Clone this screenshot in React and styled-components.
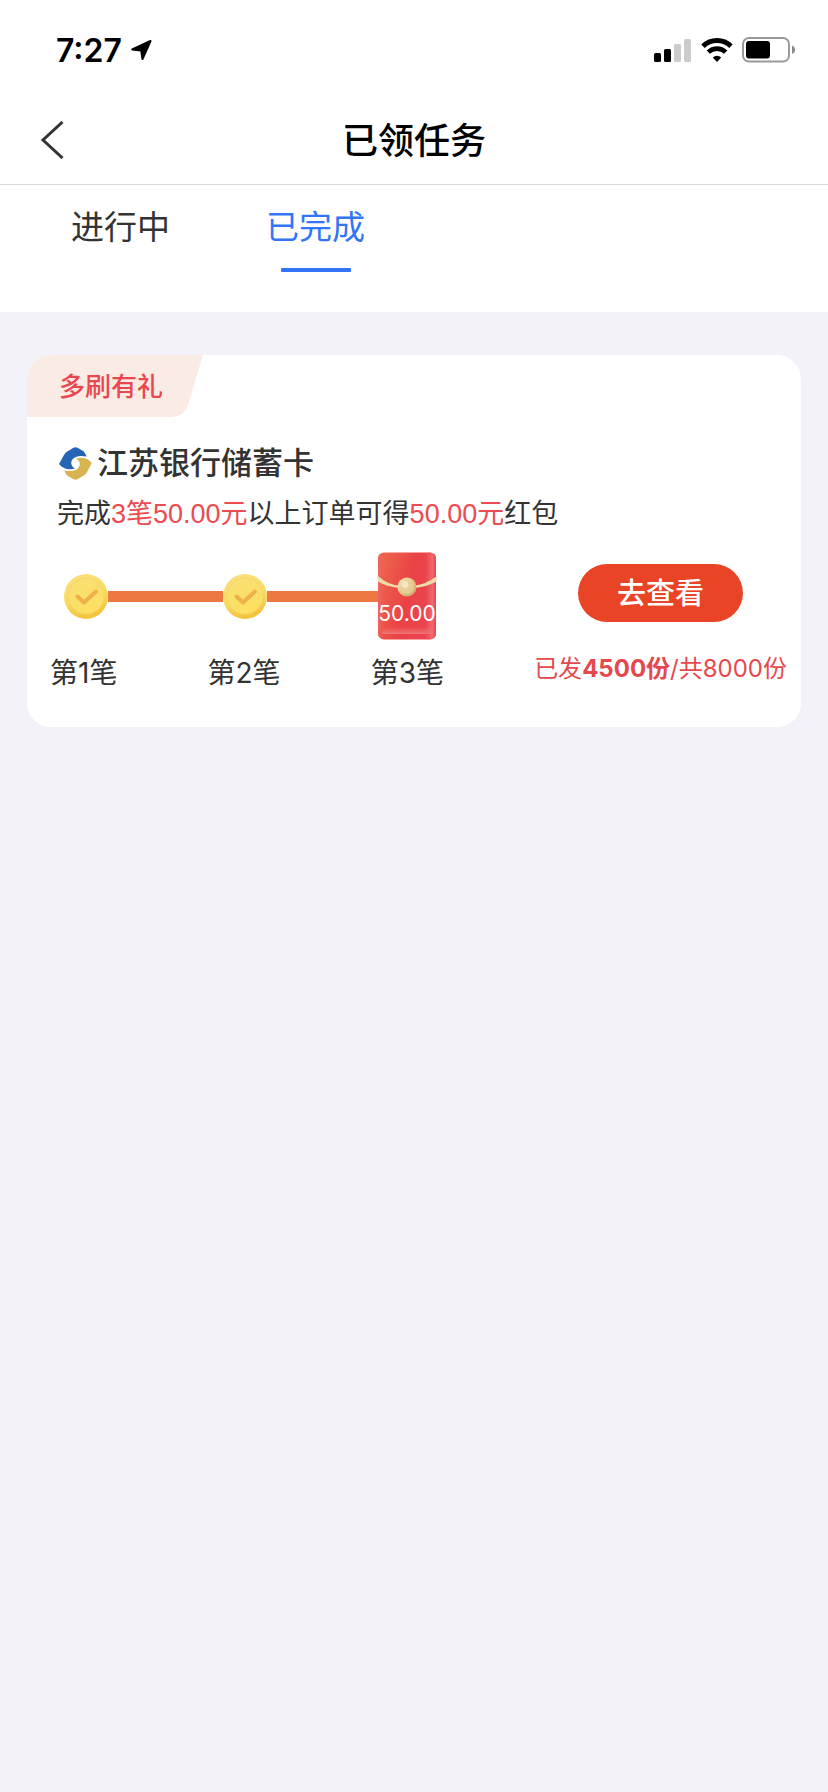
import React, { useState } from "react";
import styled, { createGlobalStyle } from "styled-components";

const GlobalStyle = createGlobalStyle`
	* {
		box-sizing: border-box;
	}

	body {
		margin: 0;
		background-color: #f3f2f9;
		color: #333;
		font-family: Inter, "Noto Sans CJK SC", sans-serif;
	}

	button {
		border: none;
		padding: 0;
		background: none;
		color: inherit;
		font: inherit;
		cursor: pointer;
	}

	h1, h2, p, ul {
		margin: 0;
		padding: 0;
	}

	svg {
		display: block;
		flex-shrink: 0;
	}
`;

const StatusBar = styled.div`
	display: flex;
	justify-content: space-between;
	align-items: center;
	height: 96px;
	padding: 4px 33px 0 56px;
	background-color: #fff;
	color: #000;

	.time {
		font-size: 32px;
		font-weight: 600;
	}

	.group {
		display: flex;
		align-items: center;
		gap: 9px;
	}
`;

const NavBar = styled.header`
	display: grid;
	grid-template-columns: 80px 1fr 80px;
	align-items: center;
	height: 89px;
	border-bottom: 1px solid #dcdcdc;
	background-color: #fff;
`;

const BackButton = styled.button`
	padding-left: 40px;
`;

const Title = styled.h1`
	padding-top: 2px;
	color: #000;
	font-size: 36px;
	font-weight: 500;
	line-height: 52px;
	text-align: center;
`;

const Tabs = styled.nav`
	display: flex;
	gap: 96px;
	padding: 18px 71px 40px;
	background-color: #fff;
`;

const Tab = styled.button`
	display: flex;
	flex-direction: column;
	align-items: center;
	gap: 17px;
	color: ${(props) => (props.$active ? "#3375f6" : "#333")};
	font-size: 33px;
	line-height: 48px;

	&::after {
		content: "";
		width: 70px;
		height: 4px;
		border-radius: 1px;
		background-color: ${(props) => (props.$active ? "#3375f6" : "transparent")};
	}
`;

const List = styled.main`
	padding: 43px 27px;
`;

const Card = styled.article`
	overflow: hidden;
	padding-bottom: 35px;
	border-radius: 24px;
	background-color: #fff;
`;

const Tag = styled.div`
	position: relative;
	width: 176px;
	height: 62px;
	padding-left: 32px;
	color: #e8484e;
	font-size: 26px;
	font-weight: 500;
	line-height: 64px;

	svg {
		position: absolute;
		top: 0;
		left: 0;
	}

	span {
		position: relative;
	}
`;

const CardTitle = styled.h2`
	display: flex;
	align-items: center;
	gap: 5px;
	padding: 24px 32px 0;
	font-size: 31px;
	font-weight: 500;
	line-height: 44px;
`;

const Rule = styled.p`
	padding: 10px 30px 0;
	font-family: "Liberation Sans", "Noto Sans CJK SC", sans-serif;
	font-size: 27px;
	line-height: 38px;
`;

const Highlight = styled.span`
	color: #ea4c51;
`;

const CardBody = styled.div`
	display: flex;
	justify-content: space-between;
	align-items: flex-start;
	padding: 19px 14px 0 23px;
`;

const Progress = styled.div`
	flex: 0 1 394px;
`;

const Track = styled.div`
	display: flex;
	align-items: center;
	height: 88px;
	padding: 0 7px 0 14px;
`;

const Line = styled.div`
	flex: 1;
	height: 11px;
	background-color: #ee7842;
`;

// the line runs a little way under the envelope
const Envelope = styled.div`
	position: relative;
	margin-left: -4px;

	span {
		position: absolute;
		top: 49px;
		left: 0;
		width: 100%;
		color: #fff;
		font-size: 21px;
		line-height: 26px;
		text-align: center;
	}
`;

const StepNames = styled.ul`
	display: flex;
	justify-content: space-between;
	padding-top: 14px;
	font-size: 28px;
	line-height: 38px;
	list-style: none;
`;

const Action = styled.div`
	display: flex;
	flex-direction: column;
	align-items: center;
	gap: 29px;
	padding-top: 12px;
`;

const ViewButton = styled.button`
	width: 165px;
	height: 58px;
	border-radius: 29px;
	background-color: #ea4426;
	color: #fff;
	font-size: 29px;
	font-weight: 500;
	line-height: 60px;
`;

const Count = styled.p`
	color: #e5484d;
	font-size: 24px;
	line-height: 36px;
	white-space: nowrap;
`;

const ArrowIcon = () => (
	<svg width="21" height="21" viewBox="0 0 21 21">
		<path
			d="M19.5 1 11.5 19 10.2 10.6 1.2 9.4Z"
			fill="#000"
			stroke="#000"
			strokeWidth="2"
			strokeLinejoin="round"
		/>
	</svg>
);

const SignalIcon = () => (
	<svg width="38" height="24" viewBox="0 0 38 24">
		<rect x="0" y="15" width="7" height="9" rx="1.5" />
		<rect x="10" y="11" width="7" height="13" rx="1.5" />
		<rect x="20" y="6" width="7" height="18" rx="1.5" fill="#ccc" />
		<rect x="30" y="1" width="7" height="23" rx="1.5" fill="#ccc" />
	</svg>
);

const WifiIcon = () => (
	<svg width="32" height="24" viewBox="0 0 32 24">
		<path d="M2 8.2a20 20 0 0 1 28 0" fill="none" stroke="#000" strokeWidth="4.8" />
		<path d="M7.3 14.2a12.4 12.4 0 0 1 17.4 0" fill="none" stroke="#000" strokeWidth="4.6" />
		<path d="M11.8 19.4a6 6 0 0 1 8.4 0L16 24Z" />
	</svg>
);

const BatteryIcon = () => (
	<svg width="53" height="26" viewBox="0 0 53 26">
		<rect x="1" y="1" width="46" height="23.6" rx="6" fill="#fff" stroke="#999" strokeWidth="2" />
		<rect x="4" y="4" width="24" height="17.5" rx="3" />
		<path d="M50 8.500q3 1.200 3 4.300t-3 4.300Z" fill="#8a8a8a" />
	</svg>
);

const BackIcon = () => (
	<svg width="24" height="38" viewBox="0 0 24 38">
		<path d="M22.5 1 3 19l19.5 18" fill="none" stroke="#333" strokeWidth="3" />
	</svg>
);

const BankLogo = () => (
	<svg width="33" height="33" viewBox="0 0 33 33">
		<path
			d="M0 17C3 12.500 5 6.500 7.500 5L14 1Q16.500-.5 19 1L24.500 4.200Q26 5.500 27.700 9.600C22 8.400 17 8.600 13.800 12 11 15.200 12 19.300 16 21.500 10 23.200 4.500 22.400 0 17Z"
			fill="#2664b4"
		/>
		<path
			d="M33 16C30 20.500 28 26.500 25.500 28L19 32Q16.500 33.500 14 32L8.500 28.800Q7 27.500 5.300 23.400C11 24.600 16 24.400 19.200 21 22 17.800 21 13.700 17 11.500 23 9.800 28.500 10.600 33 16Z"
			fill="#d8b450"
		/>
	</svg>
);

const CoinIcon = () => (
	<svg width="44" height="45" viewBox="0 0 44 45">
		<defs>
			<linearGradient id="coinRim" x1="0" y1="0" x2="0.3" y2="1">
				<stop offset="0" stopColor="#f9e184" />
				<stop offset="0.6" stopColor="#f8dc60" />
				<stop offset="1" stopColor="#f4c440" />
			</linearGradient>
			<linearGradient id="coinFace" x1="0" y1="0" x2="0.4" y2="1">
				<stop offset="0" stopColor="#f8df74" />
				<stop offset="1" stopColor="#fbe062" />
			</linearGradient>
		</defs>
		<ellipse cx="22" cy="22.5" rx="22" ry="22.5" fill="url(#coinRim)" />
		<circle cx="22" cy="22" r="18" fill="url(#coinFace)" stroke="#f5d666" strokeWidth="1" />
		<path
			d="M13.5 22.5 20 28.500 32 17.500"
			fill="none"
			stroke="#f0b048"
			strokeWidth="4"
			strokeLinecap="round"
			strokeLinejoin="round"
		/>
	</svg>
);

const EnvelopeIcon = () => (
	<svg width="60" height="88" viewBox="0 0 60 88">
		<defs>
			<linearGradient id="envPaper" x1="0" y1="0" x2="1" y2="0.35">
				<stop offset="0" stopColor="#ee6a4c" />
				<stop offset="0.6" stopColor="#ea4246" />
				<stop offset="1" stopColor="#ea4450" />
			</linearGradient>
			<linearGradient id="envSide" x1="0" y1="0" x2="1" y2="0">
				<stop offset="0" stopColor="#ee6460" />
				<stop offset="0.1" stopColor="#ee6460" stopOpacity="0" />
				<stop offset="0.82" stopColor="#f06870" stopOpacity="0" />
				<stop offset="0.94" stopColor="#f06870" />
				<stop offset="1" stopColor="#ea4448" />
			</linearGradient>
			<linearGradient id="envShine" x1="0" y1="0" x2="0" y2="1">
				<stop offset="0" stopColor="#f07070" stopOpacity="0" />
				<stop offset="1" stopColor="#f07474" />
			</linearGradient>
			<linearGradient id="envGold" x1="0" y1="0" x2="1" y2="1">
				<stop offset="0" stopColor="#f8eac4" />
				<stop offset="0.5" stopColor="#e4c688" />
				<stop offset="1" stopColor="#c89c5c" />
			</linearGradient>
		</defs>
		<rect x="1" y="0.5" width="58" height="87" rx="6" fill="url(#envPaper)" />
		<rect x="1" y="0.5" width="58" height="87" rx="6" fill="url(#envSide)" />
		<path d="M6 75h48l1 7H5Z" fill="url(#envShine)" />
		<path d="M.5 23.500V29.500Q10 34.500 22 36H38Q50 34.500 59.500 29.500V24.500Q49 32 38 33.500H22Q10 32.500 .5 23.500Z" fill="#f0dca8" />
		<circle cx="30" cy="35" r="9.500" fill="url(#envGold)" />
		<circle cx="30" cy="35" r="7" fill="#ead09a" opacity="0.8" />
		<circle cx="28" cy="32.500" r="3.500" fill="#f8ecd0" opacity="0.8" />
	</svg>
);

const tabs = ["进行中", "已完成"];
const task = {
	tag: "多刷有礼",
	bank: "江苏银行储蓄卡",
	orders: 3,
	minimum: "50.00",
	reward: "50.00",
	sent: 4500,
	total: 8000,
};

const TaskCard = ({ info }) => {
	return (
		<Card>
			<Tag>
				<svg width="176" height="62" viewBox="0 0 176 62">
					<path d="M0 0H176L161 50Q157 62 143 62H0Z" fill="#fbebe5" />
				</svg>
				<span>{info.tag}</span>
			</Tag>
			<CardTitle>
				<BankLogo />
				{info.bank}
			</CardTitle>
			<Rule>
				完成
				<Highlight>
					{info.orders}笔{info.minimum}元
				</Highlight>
				以上订单可得<Highlight>{info.reward}元</Highlight>红包
			</Rule>
			<CardBody>
				<Progress>
					<Track>
						<CoinIcon />
						<Line />
						<CoinIcon />
						<Line />
						<Envelope>
							<EnvelopeIcon />
							<span>{info.reward}</span>
						</Envelope>
					</Track>
					<StepNames>
						{[1, 2, 3].map((step) => (
							<li key={step}>第{step}笔</li>
						))}
					</StepNames>
				</Progress>
				<Action>
					<ViewButton>去查看</ViewButton>
					<Count>
						已发<b>{info.sent}份</b>/共{info.total}份
					</Count>
				</Action>
			</CardBody>
		</Card>
	);
};

const App = () => {
	const [current, setCurrent] = useState(1);

	return (
		<>
			<GlobalStyle />
			<StatusBar>
				<div className="group">
					<span className="time">7:27</span>
					<ArrowIcon />
				</div>
				<div className="group">
					<SignalIcon />
					<WifiIcon />
					<BatteryIcon />
				</div>
			</StatusBar>
			<NavBar>
				<BackButton aria-label="返回">
					<BackIcon />
				</BackButton>
				<Title>已领任务</Title>
			</NavBar>
			<Tabs>
				{tabs.map((name, index) => (
					<Tab key={name} $active={index === current} onClick={() => setCurrent(index)}>
						{name}
					</Tab>
				))}
			</Tabs>
			<List>{current === 1 && <TaskCard info={task} />}</List>
		</>
	);
};

export default App;
